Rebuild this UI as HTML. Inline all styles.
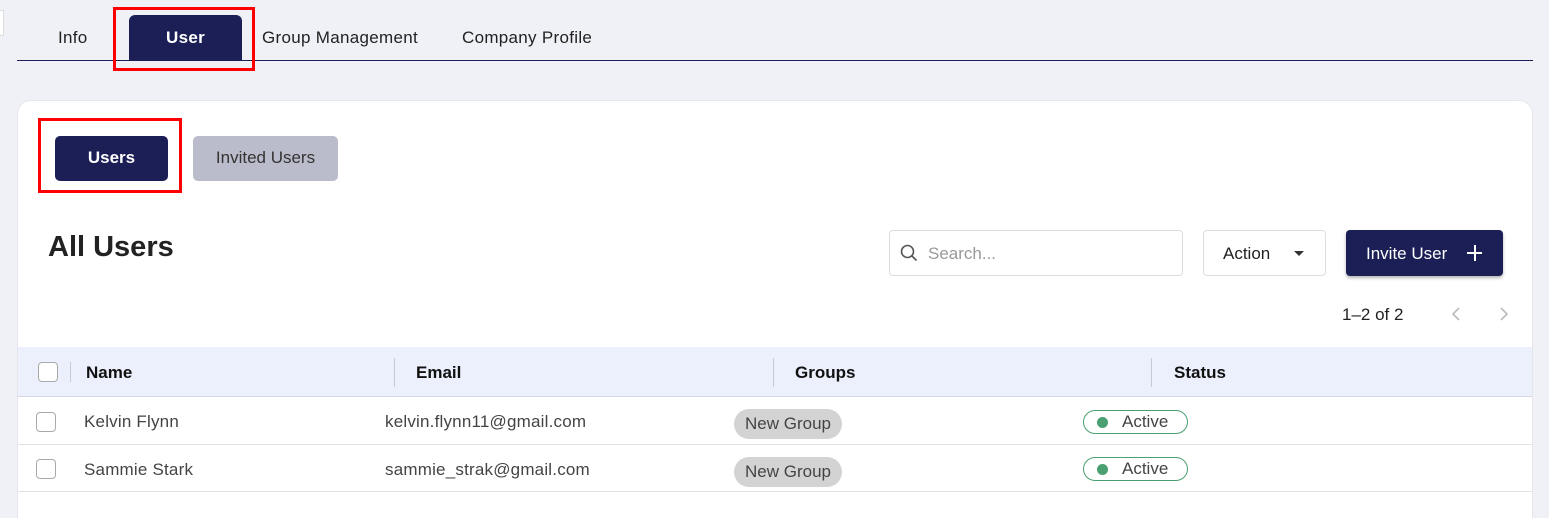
<!DOCTYPE html>
<html><head><style>
*{box-sizing:border-box;margin:0;padding:0}
html,body{width:1549px;height:518px;overflow:hidden}
body{background:#f0f1f6;font-family:"Liberation Sans",sans-serif;position:relative;color:#222}
.a{position:absolute}
.tab{position:absolute;top:28px;font-size:17px;color:#222;letter-spacing:0.3px}
.red{position:absolute;border:3px solid #f00}
.card{position:absolute;left:17px;top:100px;width:1516px;height:418px;background:#fff;border-radius:14px 14px 0 0;border:1px solid #e6e7ec;border-bottom:none}
.th{position:absolute;top:363px;font-size:17px;font-weight:bold;color:#111}
.sep{position:absolute;top:358px;width:1px;height:29px;background:#c8cbd3}
.cb{position:absolute;width:20px;height:20px;border:1px solid #aaa;border-radius:4px;background:#fff}
.td{position:absolute;font-size:17px;color:#444;letter-spacing:0.2px}
.pill{position:absolute;width:108px;height:30px;background:#d3d3d3;border-radius:15px;font-size:17px;color:#444;text-align:center;line-height:30px}
.act{position:absolute;width:105px;height:24px;border:1px solid #4aa070;border-radius:12px;font-size:17px;color:#444;line-height:22px;padding-left:38px}
.act:before{content:"";position:absolute;left:13px;top:6px;width:11px;height:11px;border-radius:50%;background:#4aa070}
</style></head><body>
<div class="a" style="left:0;top:10px;width:4px;height:26px;background:#fff;border:1px solid #ddd;border-left:none"></div>
<div class="tab" style="left:58px">Info</div>
<div class="a" style="left:129px;top:15px;width:113px;height:45px;background:#1b1f55;border-radius:6px 6px 0 0"></div>
<div class="tab" style="left:166px;color:#fff;font-weight:bold">User</div>
<div class="tab" style="left:262px">Group Management</div>
<div class="tab" style="left:462px">Company Profile</div>
<div class="a" style="left:17px;top:60px;width:1516px;height:1px;background:#1b1f55"></div>
<div class="red" style="left:113px;top:7px;width:142px;height:64px"></div>
<div class="card"></div>
<div class="a" style="left:55px;top:136px;width:113px;height:45px;background:#1b1f55;border-radius:5px;color:#fff;font-weight:bold;font-size:17px;text-align:center;line-height:43px">Users</div>
<div class="red" style="left:38px;top:118px;width:144px;height:75px"></div>
<div class="a" style="left:193px;top:136px;width:145px;height:45px;background:#bbbccb;border-radius:5px;color:#333;font-size:17px;text-align:center;line-height:43px">Invited Users</div>
<div class="a" style="left:48px;top:231px;font-size:29px;font-weight:bold;color:#222">All Users</div>
<div class="a" style="left:889px;top:230px;width:294px;height:46px;border:1px solid #ddd;border-radius:4px"></div>
<svg class="a" style="left:900px;top:244px" width="18" height="18" viewBox="0 0 18 18"><circle cx="7.5" cy="7.5" r="6" fill="none" stroke="#555" stroke-width="1.6"/><line x1="12" y1="12" x2="16.5" y2="16.5" stroke="#555" stroke-width="1.6"/></svg>
<div class="a" style="left:928px;top:244px;font-size:17px;color:#999">Search...</div>
<div class="a" style="left:1203px;top:230px;width:123px;height:46px;border:1px solid #ddd;border-radius:4px"></div>
<div class="a" style="left:1223px;top:244px;font-size:17px;color:#222">Action</div>
<div class="a" style="left:1294px;top:251px;border-left:5px solid transparent;border-right:5px solid transparent;border-top:5px solid #333"></div>
<div class="a" style="left:1346px;top:230px;width:157px;height:46px;background:#1b1f55;border-radius:4px;box-shadow:0 2px 3px rgba(0,0,0,.3)"></div>
<div class="a" style="left:1366px;top:244px;font-size:17px;color:#fff">Invite User</div>
<div class="a" style="left:1467px;top:252px;width:15px;height:2px;background:#fff"></div>
<div class="a" style="left:1474px;top:245px;width:2px;height:16px;background:#fff"></div>
<div class="a" style="left:1342px;top:305px;font-size:17px;color:#222">1–2 of 2</div>
<svg class="a" style="left:1449px;top:306px" width="14" height="16"><path d="M10 2 L4 8 L10 14" fill="none" stroke="#bbb" stroke-width="1.6"/></svg>
<svg class="a" style="left:1497px;top:306px" width="14" height="16"><path d="M4 2 L10 8 L4 14" fill="none" stroke="#bbb" stroke-width="1.6"/></svg>
<div class="a" style="left:18px;top:347px;width:1514px;height:50px;background:#ebf0fc;border-bottom:1px solid #d4d8e2"></div>
<div class="cb" style="left:38px;top:362px"></div>
<div class="sep" style="left:70px;top:362px;height:20px"></div>
<div class="th" style="left:86px">Name</div>
<div class="sep" style="left:394px"></div>
<div class="th" style="left:416px">Email</div>
<div class="sep" style="left:773px"></div>
<div class="th" style="left:795px">Groups</div>
<div class="sep" style="left:1151px"></div>
<div class="th" style="left:1174px">Status</div>
<div class="a" style="left:18px;top:444px;width:1514px;height:1px;background:#e2e2e2"></div>
<div class="a" style="left:18px;top:491px;width:1514px;height:1px;background:#e2e2e2"></div>
<div class="cb" style="left:36px;top:412px"></div>
<div class="td" style="left:84px;top:412px">Kelvin Flynn</div>
<div class="td" style="left:385px;top:412px">kelvin.flynn11@gmail.com</div>
<div class="pill" style="left:734px;top:409px">New Group</div>
<div class="act" style="left:1083px;top:410px">Active</div>
<div class="cb" style="left:36px;top:459px"></div>
<div class="td" style="left:84px;top:460px">Sammie Stark</div>
<div class="td" style="left:385px;top:460px">sammie_strak@gmail.com</div>
<div class="pill" style="left:734px;top:457px">New Group</div>
<div class="act" style="left:1083px;top:457px">Active</div>
</body></html>
